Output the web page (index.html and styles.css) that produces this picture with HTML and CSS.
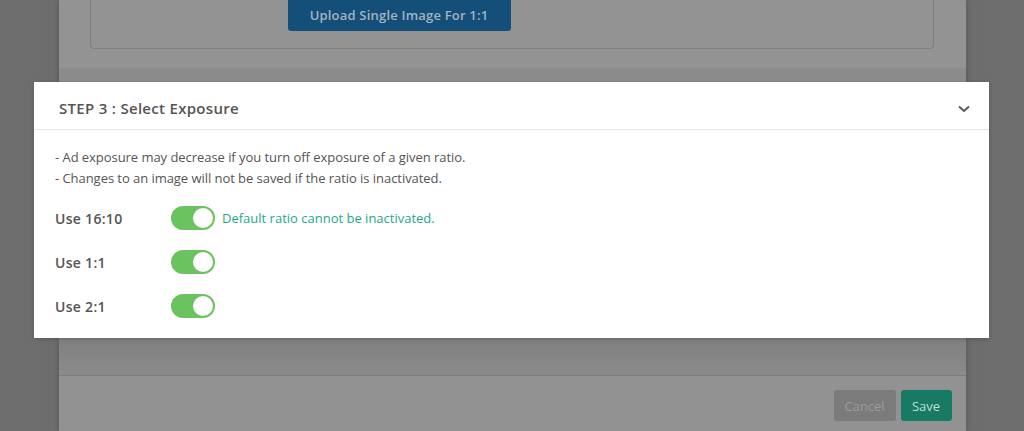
FILE: index.html
```html
<!DOCTYPE html>
<html lang="en">
<head>
  <meta charset="UTF-8" />
  <title>Select Exposure</title>
  <link rel="stylesheet" href="styles.css">
</head>
<body>
  <div class="modal">
    <div class="modal-top">
      <div class="upload-box">
        <button class="btn-upload">Upload Single Image For 1:1</button>
      </div>
    </div>
    <div class="modal-band"></div>
    <div class="modal-spacer"></div>
    <div class="modal-shade"></div>
    <div class="modal-footer">
      <button class="btn btn-cancel">Cancel</button>
      <button class="btn btn-save">Save</button>
    </div>
  </div>

  <!-- step card raised above the dimmed modal -->
  <section class="step-card">
    <header class="step-head">
      <h2>STEP 3 : Select Exposure</h2>
      <svg class="chevron" width="12" height="8" viewBox="0 0 12 8">
        <path d="M1 1.5 L6 6 L11 1.5" fill="none" stroke="#555" stroke-width="1.8" />
      </svg>
    </header>
    <div class="step-body">
      <p class="note">- Ad exposure may decrease if you turn off exposure of a given ratio.</p>
      <p class="note">- Changes to an image will not be saved if the ratio is inactivated.</p>
      <div class="ratio-list">
        <div class="ratio-row">
          <span class="ratio-label">Use 16:10</span>
          <span class="toggle on"><span class="knob"></span></span>
          <span class="ratio-help">Default ratio cannot be inactivated.</span>
        </div>
        <div class="ratio-row">
          <span class="ratio-label">Use 1:1</span>
          <span class="toggle on"><span class="knob"></span></span>
        </div>
        <div class="ratio-row">
          <span class="ratio-label">Use 2:1</span>
          <span class="toggle on"><span class="knob"></span></span>
        </div>
      </div>
    </div>
  </section>
</body>
</html>
```

FILE: styles.css
```css
body {
  margin: 0;
  height: 431px;
  overflow: hidden;
  background: linear-gradient(90deg, #6e6e6e, #666 50%, #6e6e6e);
  font-family: 'Open Sans', sans-serif;
  display: flex;
  justify-content: center;
  position: relative;
}
.modal {
  width: 907px;
  height: 431px;
  background: #929292;
  display: flex;
  flex-direction: column;
  box-shadow: 0 0 6px rgba(0, 0, 0, 0.25);
}
.modal-top {
  height: 68px;
  padding: 0 32px 0 31px;
  background: #939393;
}
.upload-box {
  height: 51px;
  margin-top: -4px;
  border: 1px solid #7f7f7f;
  border-radius: 4px;
  display: flex;
  padding-left: 197px;
}
.btn-upload {
  width: 223px;
  height: 34px;
  background: #134f78;
  color: #a3b3c2;
  border: none;
  border-radius: 3px;
  font-family: 'Open Sans', sans-serif;
  font-size: 13px;
  font-weight: 600;
  letter-spacing: 0.2px;
  padding-top: 2px;
}
.modal-band {
  height: 14px;
  background: #8c8c8c;
}
.modal-spacer {
  height: 256px;
}
.modal-shade {
  height: 37px;
  background: linear-gradient(#7f7f7f, #8b8b8b);
  border-bottom: 1px solid #7d7d7d;
}
.modal-footer {
  flex: 1;
  display: flex;
  justify-content: flex-end;
  align-items: flex-start;
  gap: 5px;
  padding: 14px 14px 0 0;
}
.btn {
  height: 31px;
  border: none;
  border-radius: 3px;
  font-family: 'Open Sans', sans-serif;
  font-size: 13px;
  padding: 0;
}
.btn-cancel {
  width: 62px;
  background: #7b7b7b;
  color: #9c9c9c;
}
.btn-save {
  width: 51px;
  background: #177a62;
  color: #c3ded6;
}

.step-card {
  position: absolute;
  top: 82px;
  left: 34px;
  width: 955px;
  height: 256px;
  background: #fff;
  box-shadow: 0 1px 4px rgba(0, 0, 0, 0.2);
}
.step-head {
  height: 48px;
  box-sizing: border-box;
  border-bottom: 1px solid #e6e6e6;
  display: flex;
  align-items: center;
  justify-content: space-between;
  padding: 5px 19px 0 25px;
}
.step-head h2 {
  margin: 0;
  font-size: 15px;
  font-weight: 600;
  color: #555;
  letter-spacing: 0.3px;
}
.chevron {
  display: block;
  margin-top: 2px;
}
.step-body {
  padding: 17px 21px 0;
}
.note {
  margin: 0;
  font-size: 13px;
  line-height: 21px;
  color: #555;
  letter-spacing: -0.05px;
}
.ratio-list {
  margin-top: 17px;
  display: flex;
  flex-direction: column;
  gap: 20px;
}
.ratio-row {
  display: flex;
  align-items: center;
  height: 24px;
}
.ratio-label {
  width: 116px;
  font-size: 14px;
  font-weight: 600;
  color: #555;
  letter-spacing: 0.3px;
}
.toggle {
  width: 44px;
  height: 24px;
  border-radius: 12px;
  background: #6bc35f;
  position: relative;
}
.toggle .knob {
  position: absolute;
  top: 2px;
  right: 2px;
  width: 20px;
  height: 20px;
  border-radius: 50%;
  background: #fff;
}
.ratio-help {
  margin-left: 7px;
  font-size: 13px;
  color: #1ea98a;
}
```
